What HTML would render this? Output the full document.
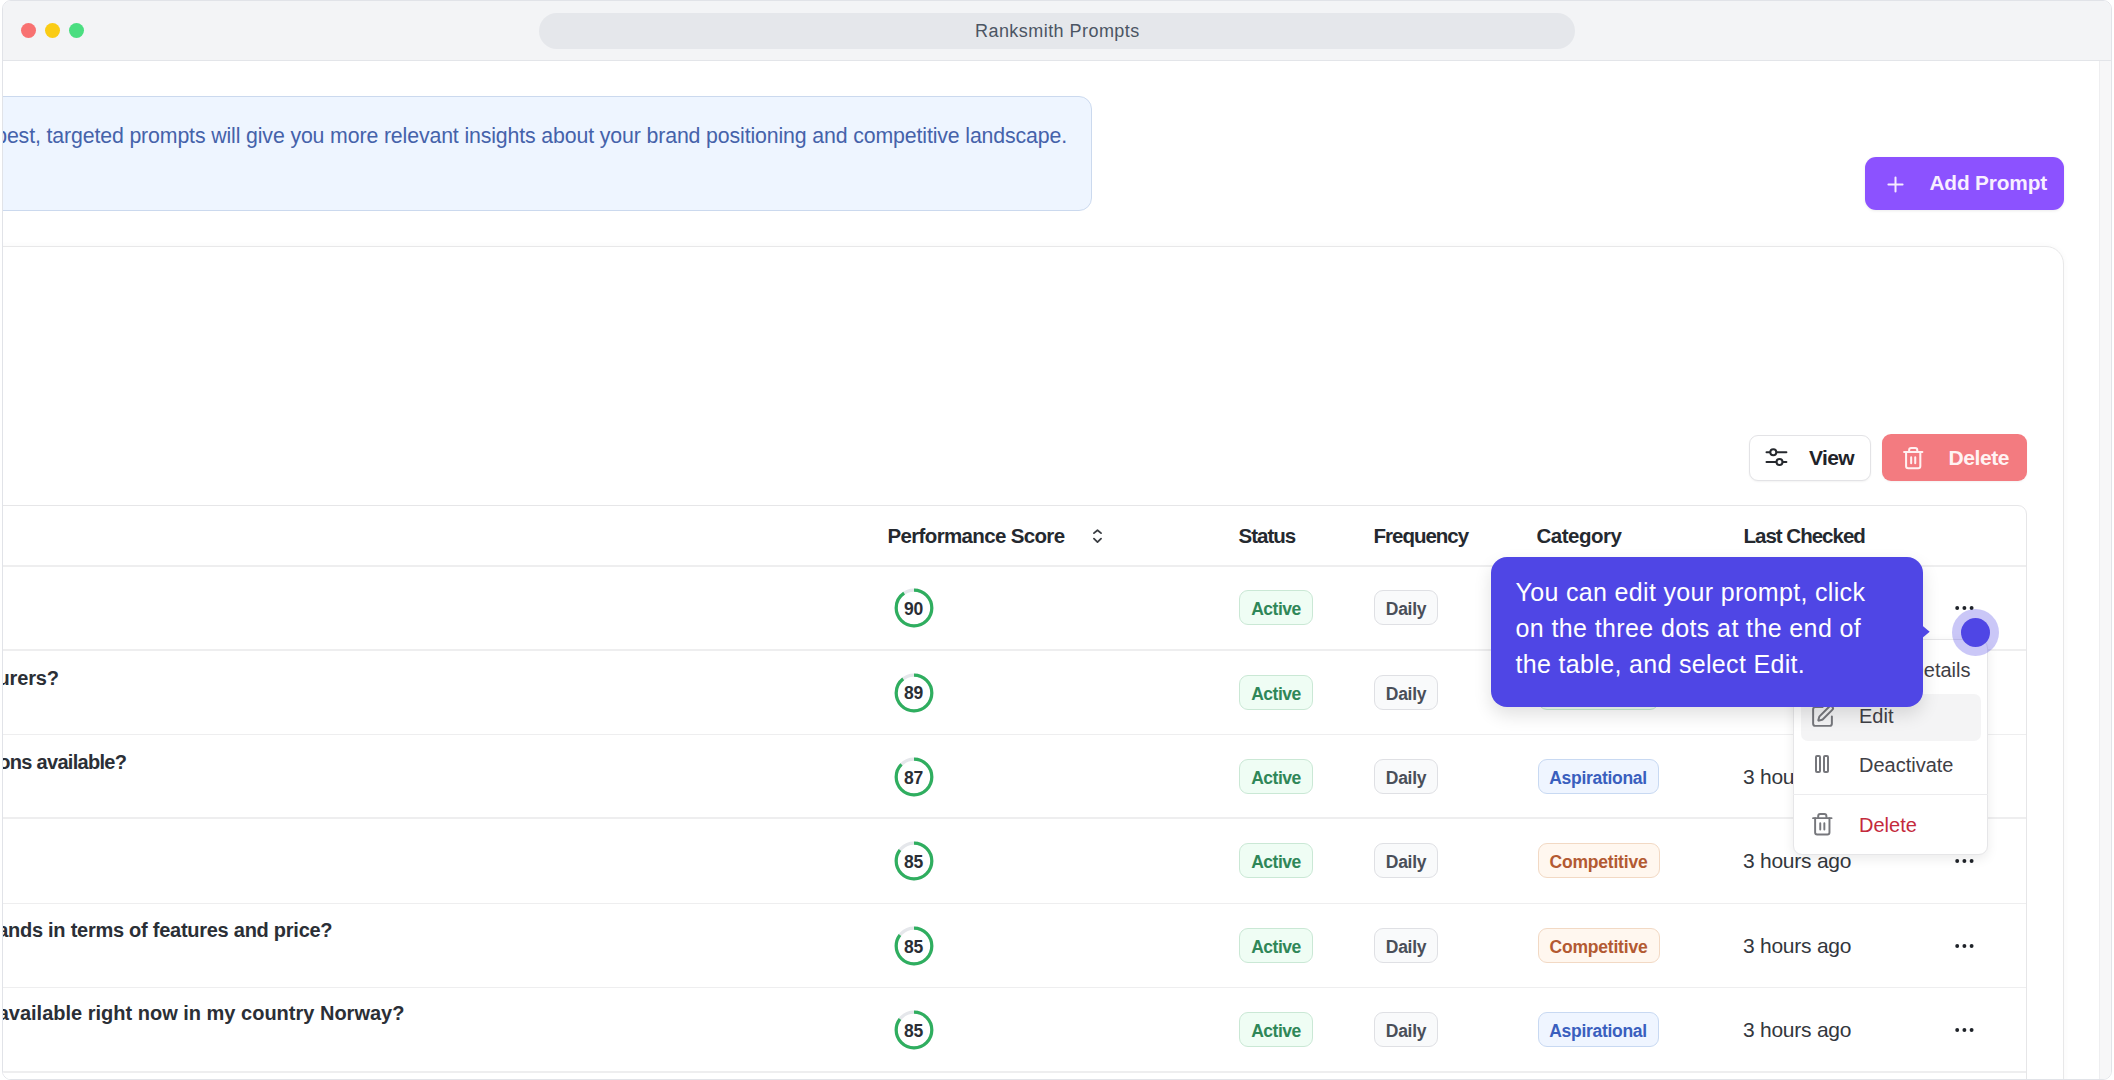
<!DOCTYPE html>
<html><head><meta charset="utf-8">
<style>
*{box-sizing:border-box;margin:0;padding:0}
html,body{width:2114px;height:1080px;overflow:hidden;background:#fff;font-family:"Liberation Sans",sans-serif}
#frame{position:absolute;left:2px;top:0;width:2110px;height:1080px;border:1px solid #e1e3e8;border-radius:9px;overflow:hidden;background:#fff}
#pg{position:absolute;left:-3px;top:-1px;width:2114px;height:1080px}
#pg div{position:absolute}
#titlebar{left:0;top:0;width:2114px;height:61px;background:#f3f4f6;border-bottom:1px solid #e3e5e9}
.dot{width:15px;height:15px;border-radius:50%;top:22.5px}
#url{left:539px;top:13px;width:1036px;height:36px;border-radius:18px;background:#e5e7eb}
#scroll{left:2099px;top:61px;width:13px;height:1019px;background:#f7f7f8;border-left:1px solid #eeeef0}
#banner{left:-40px;top:96px;width:1132px;height:115px;background:#eef5ff;border:1px solid #cbd9ee;border-radius:13px}
#addbtn{left:1865px;top:157px;width:199px;height:53px;border-radius:11px;background:#8c52ff;box-shadow:0 1px 3px rgba(0,0,0,.08)}
#card{left:-40px;top:246px;width:2104px;height:900px;border:1px solid #e8e8e9;border-radius:18px;background:#fff;box-shadow:0 0 6px rgba(0,0,0,.035)}
#viewbtn{left:1749px;top:434.8px;width:122px;height:46.4px;border:1px solid #e3e3e6;border-radius:9px;background:#fff;box-shadow:0 1px 2px rgba(0,0,0,.05)}
#delbtn{left:1882px;top:434px;width:145px;height:47px;border-radius:9px;background:#f37b80;box-shadow:0 1px 2px rgba(0,0,0,.05)}
#table{left:-40px;top:504.8px;width:2067px;height:700px;border:1px solid #e6e6e8;border-radius:9px;background:#fff}
.hl{left:0;width:2026px;height:1.5px;background:#eeeeef}
.badge{height:35px;border-radius:9px;font-weight:bold;font-size:17.5px;line-height:36.8px;text-align:center;white-space:nowrap}
.active{left:1239px;width:74px;background:#effdf4;border:1px solid #cae8d5;color:#2f8758;letter-spacing:-0.5px}
.daily{left:1374px;width:64px;background:#f9fafb;border:1px solid #dfe0e4;color:#4a4f59;letter-spacing:-0.3px}
.asp{left:1537.5px;width:121px;background:#eff5ff;border:1px solid #c8d9f2;color:#3a5fbe;letter-spacing:-0.3px}
.comp{left:1537.5px;width:122px;background:#fff7ef;border:1px solid #f2d9c4;color:#b35a32;letter-spacing:-0.2px}
.green{left:1537.5px;width:121px;background:#effdf4;border:1px solid #c5ead2;color:#2d8a58}
.dots{left:1955px;width:20px;height:4px}
.dots i{position:absolute;top:0.2px;width:3.7px;height:3.7px;border-radius:50%;background:#1f2329}
#menu{left:1793px;top:638.5px;width:195px;height:216px;background:#fff;border:1px solid #e6e6e8;border-radius:9px;box-shadow:0 4px 12px rgba(0,0,0,.08)}
#edithl{left:1801px;top:693.5px;width:180px;height:47px;background:#f4f4f5;border-radius:7px}
#menudiv{left:1793px;top:794px;width:195px;height:1px;background:#ececee}
#tip{left:1491px;top:557px;width:432px;height:149.5px;background:#4f46e5;border-radius:16px;box-shadow:0 8px 18px rgba(0,0,0,.12)}
#halo{left:1951.7px;top:608.8px;width:47.6px;height:47.6px;border-radius:50%;background:rgba(79,70,229,.3)}
#hcore{left:1960.7px;top:617.7px;width:29.8px;height:29.8px;border-radius:50%;background:#4f46e5}
</style></head><body>
<div id="frame"><div id="pg">
  <div id="titlebar">
    <div class="dot" style="left:21px;background:#f87171"></div>
    <div class="dot" style="left:45px;background:#facc15"></div>
    <div class="dot" style="left:69px;background:#4ade80"></div>
    <div id="url"></div>
  </div>
  <div id="banner"></div>
  <div id="addbtn"></div>
  <div id="card"></div>
  <div id="viewbtn"></div>
  <div id="delbtn"></div>
  <div id="table"></div>
  <div class="hl" style="top:565.45px"></div>
<div class="hl" style="top:649.45px"></div>
<div class="hl" style="top:733.75px"></div>
<div class="hl" style="top:817.25px"></div>
<div class="hl" style="top:902.75px"></div>
<div class="hl" style="top:986.85px"></div>
<div class="hl" style="top:1071.05px"></div>
<div style="left:887.5px;top:525.55px;font-size:20.5px;line-height:20.5px;font-weight:bold;color:#25292f;letter-spacing:-0.65px;white-space:nowrap;">Performance Score</div>
<div style="left:1238.5px;top:525.55px;font-size:20.5px;line-height:20.5px;font-weight:bold;color:#25292f;letter-spacing:-1.0px;white-space:nowrap;">Status</div>
<div style="left:1373.5px;top:525.55px;font-size:20.5px;line-height:20.5px;font-weight:bold;color:#25292f;letter-spacing:-1.0px;white-space:nowrap;">Frequency</div>
<div style="left:1536.5px;top:525.55px;font-size:20.5px;line-height:20.5px;font-weight:bold;color:#25292f;letter-spacing:-0.5px;white-space:nowrap;">Category</div>
<div style="left:1743.5px;top:525.55px;font-size:20.5px;line-height:20.5px;font-weight:bold;color:#25292f;letter-spacing:-1.0px;white-space:nowrap;">Last Checked</div>
<svg style="position:absolute;left:1091px;top:527px" width="13" height="18" viewBox="0 0 13 18"><path d="M2.95 6.15 L6.5 3.25 L10.05 6.15 M2.95 11.65 L6.5 15.05 L10.05 11.65" fill="none" stroke="#3a3d42" stroke-width="1.8" stroke-linecap="round" stroke-linejoin="round"/></svg>
<svg style="position:absolute;left:893.90px;top:588.10px" width="40" height="40" viewBox="0 0 40 40"><circle cx="20" cy="20" r="17.8" fill="none" stroke="#e5e7eb" stroke-width="3.2"/><circle cx="20" cy="20" r="17.8" fill="none" stroke="#2fae5f" stroke-width="3.2" stroke-dasharray="100.66 111.84" transform="rotate(-90 20 20)"/></svg>
<div style="left:904.0px;top:600.99px;font-size:17.5px;line-height:17.5px;font-weight:bold;color:#2a2e35;letter-spacing:-0.2px;white-space:nowrap;">90</div>
<div class="badge active" style="top:590.00px">Active</div>
<div class="badge daily" style="top:590.00px">Daily</div>
<svg style="position:absolute;left:1953px;top:602.50px" width="24" height="10" viewBox="0 0 24 10"><g fill="#1f2329"><circle cx="4.2" cy="5" r="1.95"/><circle cx="11.4" cy="5" r="1.95"/><circle cx="18.6" cy="5" r="1.95"/></g></svg>
<svg style="position:absolute;left:893.90px;top:672.60px" width="40" height="40" viewBox="0 0 40 40"><circle cx="20" cy="20" r="17.8" fill="none" stroke="#e5e7eb" stroke-width="3.2"/><circle cx="20" cy="20" r="17.8" fill="none" stroke="#2fae5f" stroke-width="3.2" stroke-dasharray="99.54 111.84" transform="rotate(-90 20 20)"/></svg>
<div style="left:904.0px;top:685.49px;font-size:17.5px;line-height:17.5px;font-weight:bold;color:#2a2e35;letter-spacing:-0.2px;white-space:nowrap;">89</div>
<div class="badge active" style="top:674.50px">Active</div>
<div class="badge daily" style="top:674.50px">Daily</div>
<div class="badge green" style="top:674.50px">Informational</div>
<div style="right:2055.20px;top:668.27px;font-size:20px;line-height:20px;font-weight:bold;color:#2b2f36;letter-spacing:-0.15px;white-space:nowrap">urers?</div>
<svg style="position:absolute;left:893.90px;top:756.90px" width="40" height="40" viewBox="0 0 40 40"><circle cx="20" cy="20" r="17.8" fill="none" stroke="#e5e7eb" stroke-width="3.2"/><circle cx="20" cy="20" r="17.8" fill="none" stroke="#2fae5f" stroke-width="3.2" stroke-dasharray="97.30 111.84" transform="rotate(-90 20 20)"/></svg>
<div style="left:904.0px;top:769.79px;font-size:17.5px;line-height:17.5px;font-weight:bold;color:#2a2e35;letter-spacing:-0.2px;white-space:nowrap;">87</div>
<div class="badge active" style="top:758.80px">Active</div>
<div class="badge daily" style="top:758.80px">Daily</div>
<div class="badge asp" style="top:758.80px">Aspirational</div>
<div style="left:1743.0px;top:765.72px;font-size:21px;line-height:21px;font-weight:normal;color:#33373d;letter-spacing:-0.25px;white-space:nowrap;">3 hours ago</div>
<div style="right:1987.70px;top:752.47px;font-size:20px;line-height:20px;font-weight:bold;color:#2b2f36;letter-spacing:-0.7px;white-space:nowrap">ons available?</div>
<svg style="position:absolute;left:893.90px;top:841.40px" width="40" height="40" viewBox="0 0 40 40"><circle cx="20" cy="20" r="17.8" fill="none" stroke="#e5e7eb" stroke-width="3.2"/><circle cx="20" cy="20" r="17.8" fill="none" stroke="#2fae5f" stroke-width="3.2" stroke-dasharray="95.06 111.84" transform="rotate(-90 20 20)"/></svg>
<div style="left:904.0px;top:854.29px;font-size:17.5px;line-height:17.5px;font-weight:bold;color:#2a2e35;letter-spacing:-0.2px;white-space:nowrap;">85</div>
<div class="badge active" style="top:843.30px">Active</div>
<div class="badge daily" style="top:843.30px">Daily</div>
<div class="badge comp" style="top:843.30px">Competitive</div>
<div style="left:1743.0px;top:850.22px;font-size:21px;line-height:21px;font-weight:normal;color:#33373d;letter-spacing:-0.25px;white-space:nowrap;">3 hours ago</div>
<svg style="position:absolute;left:1953px;top:855.80px" width="24" height="10" viewBox="0 0 24 10"><g fill="#1f2329"><circle cx="4.2" cy="5" r="1.95"/><circle cx="11.4" cy="5" r="1.95"/><circle cx="18.6" cy="5" r="1.95"/></g></svg>
<svg style="position:absolute;left:893.90px;top:926.10px" width="40" height="40" viewBox="0 0 40 40"><circle cx="20" cy="20" r="17.8" fill="none" stroke="#e5e7eb" stroke-width="3.2"/><circle cx="20" cy="20" r="17.8" fill="none" stroke="#2fae5f" stroke-width="3.2" stroke-dasharray="95.06 111.84" transform="rotate(-90 20 20)"/></svg>
<div style="left:904.0px;top:938.99px;font-size:17.5px;line-height:17.5px;font-weight:bold;color:#2a2e35;letter-spacing:-0.2px;white-space:nowrap;">85</div>
<div class="badge active" style="top:928.00px">Active</div>
<div class="badge daily" style="top:928.00px">Daily</div>
<div class="badge comp" style="top:928.00px">Competitive</div>
<div style="left:1743.0px;top:934.92px;font-size:21px;line-height:21px;font-weight:normal;color:#33373d;letter-spacing:-0.25px;white-space:nowrap;">3 hours ago</div>
<svg style="position:absolute;left:1953px;top:940.50px" width="24" height="10" viewBox="0 0 24 10"><g fill="#1f2329"><circle cx="4.2" cy="5" r="1.95"/><circle cx="11.4" cy="5" r="1.95"/><circle cx="18.6" cy="5" r="1.95"/></g></svg>
<div style="right:1781.70px;top:919.87px;font-size:20px;line-height:20px;font-weight:bold;color:#2b2f36;letter-spacing:-0.26px;white-space:nowrap">ands in terms of features and price?</div>
<svg style="position:absolute;left:893.90px;top:1010.30px" width="40" height="40" viewBox="0 0 40 40"><circle cx="20" cy="20" r="17.8" fill="none" stroke="#e5e7eb" stroke-width="3.2"/><circle cx="20" cy="20" r="17.8" fill="none" stroke="#2fae5f" stroke-width="3.2" stroke-dasharray="95.06 111.84" transform="rotate(-90 20 20)"/></svg>
<div style="left:904.0px;top:1023.19px;font-size:17.5px;line-height:17.5px;font-weight:bold;color:#2a2e35;letter-spacing:-0.2px;white-space:nowrap;">85</div>
<div class="badge active" style="top:1012.20px">Active</div>
<div class="badge daily" style="top:1012.20px">Daily</div>
<div class="badge asp" style="top:1012.20px">Aspirational</div>
<div style="left:1743.0px;top:1019.12px;font-size:21px;line-height:21px;font-weight:normal;color:#33373d;letter-spacing:-0.25px;white-space:nowrap;">3 hours ago</div>
<svg style="position:absolute;left:1953px;top:1024.70px" width="24" height="10" viewBox="0 0 24 10"><g fill="#1f2329"><circle cx="4.2" cy="5" r="1.95"/><circle cx="11.4" cy="5" r="1.95"/><circle cx="18.6" cy="5" r="1.95"/></g></svg>
<div style="right:1709.60px;top:1003.37px;font-size:20px;line-height:20px;font-weight:bold;color:#2b2f36;letter-spacing:0.0px;white-space:nowrap">available right now in my country Norway?</div>
<div style="left:975.0px;top:21.76px;font-size:18px;line-height:18px;font-weight:normal;color:#4b5563;letter-spacing:0.45px;white-space:nowrap;">Ranksmith Prompts</div>
<div style="right:1047.00px;top:126.17px;font-size:21.3px;line-height:21.3px;font-weight:normal;color:#4562aa;letter-spacing:-0.13px;white-space:nowrap">Review and refine your prompts regularly. The best, targeted prompts will give you more relevant insights about your brand positioning and competitive landscape.</div>
<svg style="position:absolute;left:1885px;top:173.5px" width="21" height="21" viewBox="0 0 21 21"><path d="M10.5 3.4V17.6M3.4 10.5H17.6" stroke="#f6ecff" stroke-width="2" stroke-linecap="round"/></svg>
<div style="left:1929.5px;top:173.09px;font-size:20.8px;line-height:20.8px;font-weight:bold;color:#f8efff;letter-spacing:-0.15px;white-space:nowrap;">Add Prompt</div>
<svg style="position:absolute;left:1762px;top:444px" width="28" height="26" viewBox="0 0 28 26"><g fill="none" stroke="#26292e" stroke-width="2" stroke-linecap="round"><path d="M4.5 8.3H8.1M14.9 8.3H24.4M4.5 18H14.3M20.7 18H24.4"/><circle cx="11.3" cy="8.3" r="3"/><circle cx="17.5" cy="18" r="3"/></g></svg>
<div style="left:1809.0px;top:447.02px;font-size:21px;line-height:21px;font-weight:bold;color:#1f2329;letter-spacing:-0.6px;white-space:nowrap;">View</div>
<svg style="position:absolute;left:1900.6px;top:445.6px" width="24.4" height="24.4" viewBox="0 0 24 24"><g fill="none" stroke="#fff1f1" stroke-width="2" stroke-linecap="round" stroke-linejoin="round"><path d="M3 6h18"/><path d="M19 6v14c0 1-1 2-2 2H7c-1 0-2-1-2-2V6"/><path d="M8 6V4c0-1 1-2 2-2h4c1 0 2 1 2 2v2"/><path d="M10 11v6M14 11v6"/></g></svg>
<div style="left:1948.5px;top:447.22px;font-size:21px;line-height:21px;font-weight:bold;color:#fff3f3;letter-spacing:-0.4px;white-space:nowrap;">Delete</div>
<div id="menu"></div>
<div id="edithl"></div>
<div id="menudiv"></div>
<div style="right:143.50px;top:659.97px;font-size:20px;line-height:20px;font-weight:normal;color:#3f4046;letter-spacing:0px;white-space:nowrap">View Details</div>
<svg style="position:absolute;left:1809.5px;top:704.4px" width="25" height="25" viewBox="0 0 24 24"><g fill="none" stroke="#76777c" stroke-width="1.9" stroke-linecap="round" stroke-linejoin="round"><path d="M12 3H5a2 2 0 0 0-2 2v14a2 2 0 0 0 2 2h14a2 2 0 0 0 2-2v-7"/><path d="M18.375 2.625a1 1 0 0 1 3 3l-9.013 9.014a2 2 0 0 1-.853.505l-2.873.84a.5.5 0 0 1-.62-.62l.84-2.873a2 2 0 0 1 .506-.852z"/></g></svg>
<div style="left:1859.0px;top:706.17px;font-size:20px;line-height:20px;font-weight:normal;color:#3f4046;letter-spacing:0px;white-space:nowrap;">Edit</div>
<svg style="position:absolute;left:1810.2px;top:752.2px" width="24" height="24" viewBox="0 0 24 24"><g fill="none" stroke="#76777c" stroke-width="2" stroke-linecap="round" stroke-linejoin="round"><rect x="6" y="4" width="4" height="16" rx="1"/><rect x="14" y="4" width="4" height="16" rx="1"/></g></svg>
<div style="left:1859.0px;top:754.97px;font-size:20px;line-height:20px;font-weight:normal;color:#3f4046;letter-spacing:0px;white-space:nowrap;">Deactivate</div>
<svg style="position:absolute;left:1810px;top:811.5px" width="24.6" height="24.6" viewBox="0 0 24 24"><g fill="none" stroke="#76777c" stroke-width="1.9" stroke-linecap="round" stroke-linejoin="round"><path d="M3 6h18"/><path d="M19 6v14c0 1-1 2-2 2H7c-1 0-2-1-2-2V6"/><path d="M8 6V4c0-1 1-2 2-2h4c1 0 2 1 2 2v2"/><path d="M10 11v6M14 11v6"/></g></svg>
<div style="left:1859.0px;top:815.47px;font-size:20px;line-height:20px;font-weight:normal;color:#c42a3c;letter-spacing:0px;white-space:nowrap;">Delete</div>
<div id="tip"></div>
<svg style="position:absolute;left:1921px;top:622px" width="10" height="20" viewBox="0 0 10 20"><path d="M0 2.6 L8.7 9.8 L0 17.1Z" fill="#4f46e5"/></svg>
<div style="left:1515.5px;top:580.34px;font-size:25px;line-height:25px;font-weight:normal;color:#ffffff;letter-spacing:0.33px;white-space:nowrap;">You can edit your prompt, click</div>
<div style="left:1515.5px;top:615.74px;font-size:25px;line-height:25px;font-weight:normal;color:#ffffff;letter-spacing:0.39px;white-space:nowrap;">on the three dots at the end of</div>
<div style="left:1515.5px;top:651.64px;font-size:25px;line-height:25px;font-weight:normal;color:#ffffff;letter-spacing:0.33px;white-space:nowrap;">the table, and select Edit.</div>
<div id="halo"></div><div id="hcore"></div>
  <div id="scroll"></div>
</div></div>
</body></html>
